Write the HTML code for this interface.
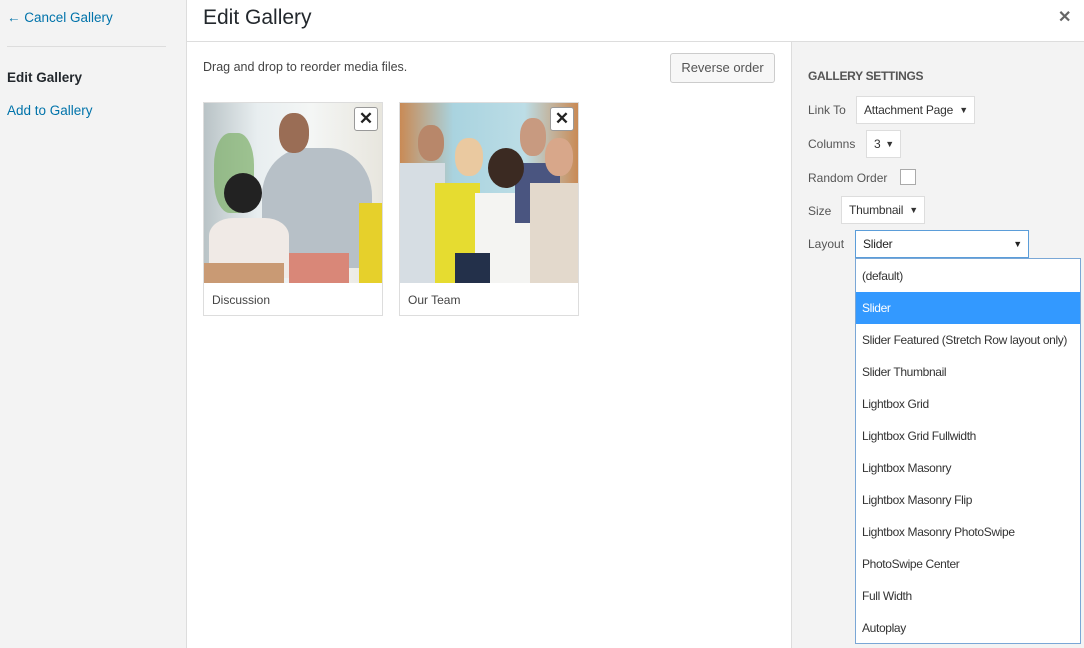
<!DOCTYPE html>
<html><head><meta charset="utf-8"><style>
*{box-sizing:border-box;margin:0;padding:0}
body{width:1084px;height:648px;overflow:hidden;font-family:"Liberation Sans",sans-serif;background:#fff;position:relative;color:#23282d}
.abs{position:absolute}
#left{left:0;top:0;width:187px;height:648px;background:#f3f3f3;border-right:1px solid #ddd}
#left a{color:#0073aa;font-size:13.5px;text-decoration:none;position:absolute;left:7px}
#hdr{left:187px;top:0;width:897px;height:42px;border-bottom:1px solid #ddd;background:#fff}
#right{left:791px;top:42px;width:293px;height:606px;background:#f3f3f3;border-left:1px solid #ddd}
.lbl{position:absolute;font-size:12px;color:#555}
.sel{position:absolute;background:#fff;border:1px solid #ddd;font-size:12px;color:#333;padding:0 0 0 7px;line-height:26px;height:28px;letter-spacing:-.2px}
.sel span{position:absolute;right:6px;font-size:9px}
.card{position:absolute;top:102px;width:180px;height:214px;border:1px solid #ddd;background:#fff}
.img{position:absolute;left:0;top:0;width:178px;height:180px;overflow:hidden}
.cap{position:absolute;left:8px;top:190px;font-size:12px;color:#444}
.x{position:absolute;right:4px;top:4px;width:24px;height:24px;border:1px solid #999;border-radius:3px;background:#fff;font-size:17px;font-weight:bold;text-align:center;line-height:22px;color:#222}
#dd{left:855px;top:258px;width:226px;height:386px;background:#fff;border:1px solid #7aa7d6;padding-top:1px}
#dd div{height:32px;line-height:32px;padding-left:6px;font-size:12px;color:#333;white-space:nowrap;letter-spacing:-.35px;overflow:hidden}
</style></head><body>
<div id="left" class="abs">
<a style="top:10px">← Cancel Gallery</a>
<div class="abs" style="left:7px;top:46px;width:159px;border-top:1px solid #ddd"></div>
<div class="abs" style="left:7px;top:70px;font-size:13.5px;font-weight:bold;color:#23282d">Edit Gallery</div>
<a style="top:103px">Add to Gallery</a>
</div>
<div id="hdr" class="abs">
<div class="abs" style="left:16px;top:6px;font-size:21px;color:#23282d">Edit Gallery</div>
<div class="abs" style="left:871px;top:7px;font-size:16px;font-weight:bold;color:#666">✕</div>
</div>
<div class="abs" style="left:203px;top:60px;font-size:12.5px;color:#444">Drag and drop to reorder media files.</div>
<div class="abs" style="left:670px;top:53px;width:105px;height:30px;border:1px solid #ccc;border-radius:3px;background:#f7f7f7;font-size:13px;line-height:28px;text-align:center;color:#555">Reverse order</div>

<div class="card" style="left:203px"><div class="img" style="background:linear-gradient(90deg,#b9c3c6 0%,#e8eef0 30%,#f4f6f5 60%,#e8e6de 100%)">
<div class="abs" style="left:10px;top:30px;width:40px;height:80px;background:#7fb06a;border-radius:40%;opacity:.7"></div>
<div class="abs" style="left:58px;top:45px;width:110px;height:120px;background:#b7c0c7;border-radius:40% 40% 10% 10%"></div>
<div class="abs" style="left:75px;top:10px;width:30px;height:40px;background:#9a6d55;border-radius:45%"></div>
<div class="abs" style="left:20px;top:70px;width:38px;height:40px;background:#222;border-radius:50%"></div>
<div class="abs" style="left:5px;top:115px;width:80px;height:60px;background:#f0eae6;border-radius:30% 30% 0 0"></div>
<div class="abs" style="left:155px;top:100px;width:30px;height:80px;background:#e6d02b"></div>
<div class="abs" style="left:85px;top:150px;width:60px;height:30px;background:#d98778"></div>
<div class="abs" style="left:0;top:160px;width:80px;height:20px;background:#c99a74"></div>
</div><div class="x">✕</div><div class="cap">Discussion</div></div>

<div class="card" style="left:399px"><div class="img" style="background:linear-gradient(90deg,#c98a55 0%,#a9d3df 30%,#bcdde6 70%,#c98a55 100%)">
<div class="abs" style="left:0;top:60px;width:45px;height:120px;background:#d6dde3"></div>
<div class="abs" style="left:35px;top:80px;width:45px;height:100px;background:#e6dc30"></div>
<div class="abs" style="left:75px;top:90px;width:55px;height:90px;background:#f4f4f2"></div>
<div class="abs" style="left:115px;top:60px;width:45px;height:60px;background:#4a5580"></div>
<div class="abs" style="left:130px;top:80px;width:48px;height:100px;background:#e3d9cc"></div>
<div class="abs" style="left:18px;top:22px;width:26px;height:36px;background:#b8876a;border-radius:45%"></div>
<div class="abs" style="left:55px;top:35px;width:28px;height:38px;background:#eac9a0;border-radius:45%"></div>
<div class="abs" style="left:88px;top:45px;width:36px;height:40px;background:#3b2a22;border-radius:50%"></div>
<div class="abs" style="left:120px;top:15px;width:26px;height:38px;background:#c89a80;border-radius:45%"></div>
<div class="abs" style="left:145px;top:35px;width:28px;height:38px;background:#d8a78a;border-radius:45%"></div>
<div class="abs" style="left:55px;top:150px;width:35px;height:30px;background:#23304a"></div>
</div><div class="x">✕</div><div class="cap">Our Team</div></div>

<div id="right" class="abs"></div>
<div class="abs" style="left:808px;top:69px;font-size:12px;color:#555;font-weight:bold;letter-spacing:-.3px">GALLERY SETTINGS</div>
<div class="lbl" style="left:808px;top:103px">Link To</div>
<div class="sel" style="left:856px;top:96px;width:119px">Attachment Page<span>▼</span></div>
<div class="lbl" style="left:808px;top:137px">Columns</div>
<div class="sel" style="left:866px;top:130px;width:35px">3<span>▼</span></div>
<div class="lbl" style="left:808px;top:171px">Random Order</div>
<div class="abs" style="left:900px;top:169px;width:16px;height:16px;border:1px solid #aaa;background:#fff"></div>
<div class="lbl" style="left:808px;top:204px">Size</div>
<div class="sel" style="left:841px;top:196px;width:84px">Thumbnail<span>▼</span></div>
<div class="lbl" style="left:808px;top:237px">Layout</div>
<div class="sel" style="left:855px;top:230px;width:174px;border-color:#5b9dd9;color:#222">Slider<span>▼</span></div>
<div id="dd" class="abs">
<div>(default)</div>
<div style="background:#3399ff;color:#fff">Slider</div>
<div>Slider Featured (Stretch Row layout only)</div>
<div>Slider Thumbnail</div>
<div>Lightbox Grid</div>
<div>Lightbox Grid Fullwidth</div>
<div>Lightbox Masonry</div>
<div>Lightbox Masonry Flip</div>
<div>Lightbox Masonry PhotoSwipe</div>
<div>PhotoSwipe Center</div>
<div>Full Width</div>
<div>Autoplay</div>
</div>
</body></html>
